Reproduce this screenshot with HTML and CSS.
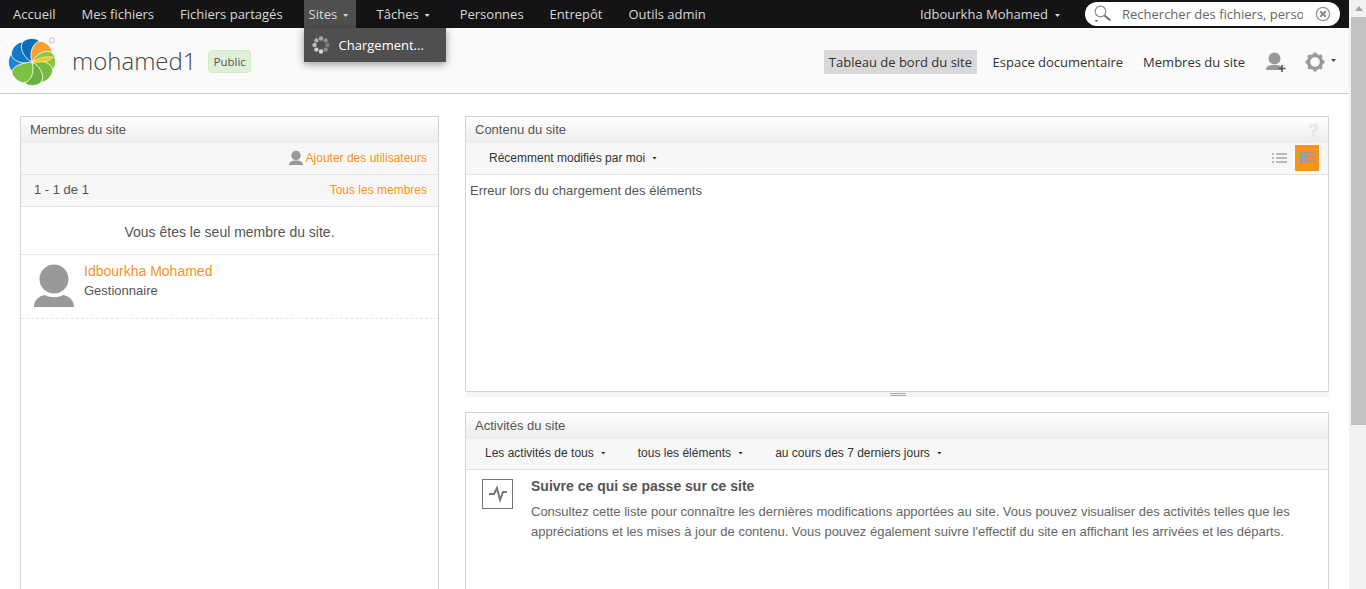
FILE: index.html
```html
<!DOCTYPE html>
<html lang="fr">
<head>
<meta charset="utf-8">
<title>mohamed1</title>
<link rel="stylesheet" href="styles.css">
</head>
<body>
<div class="window">
  <div class="page">
    <nav class="topbar">
      <a class="nav-item">Accueil</a>
      <a class="nav-item">Mes fichiers</a>
      <a class="nav-item">Fichiers partagés</a>
      <div class="nav-item nav-sites">Sites<span class="caret"></span>
        <div class="menu">
          <svg class="spinner" width="18" height="18" viewBox="0 0 18 18">
            <circle cx="9" cy="2.500" r="2.200" fill="#a8a8a8"/><circle cx="13.600" cy="4.400" r="2.200" fill="#8e8e8e"/>
            <circle cx="15.500" cy="9" r="2.200" fill="#7c7c7c"/><circle cx="13.600" cy="13.600" r="2.200" fill="#8c8c8c"/>
            <circle cx="9" cy="15.500" r="2.200" fill="#d6d6d6"/><circle cx="4.400" cy="13.600" r="2.200" fill="#cfcfcf"/>
            <circle cx="2.500" cy="9" r="2.200" fill="#bdbdbd"/><circle cx="4.400" cy="4.400" r="2.200" fill="#b0b0b0"/>
          </svg>
          <span>Chargement...</span>
        </div>
      </div>
      <a class="nav-item nav-tasks">Tâches<span class="caret"></span></a>
      <a class="nav-item">Personnes</a>
      <a class="nav-item">Entrepôt</a>
      <a class="nav-item">Outils admin</a>
      <a class="nav-item nav-user">Idbourkha Mohamed<span class="caret"></span></a>
      <div class="search">
        <svg width="20" height="20" viewBox="0 0 20 20" class="search-icon">
          <circle cx="7.500" cy="7.500" r="5.300" fill="none" stroke="#8d8d8d" stroke-width="1.200"/>
          <path d="M11.500 11.500l6 5" stroke="#777" stroke-width="2.200" fill="none"/>
          <path d="M1.500 16h4l-2 2.200z" fill="#777"/>
        </svg>
        <input class="search-input" type="text" placeholder="Rechercher des fichiers, personnes, sites">
        <svg width="16" height="16" viewBox="0 0 16 16" class="search-clear">
          <circle cx="8" cy="8" r="6.600" fill="none" stroke="#999" stroke-width="1.400"/>
          <path d="M5.200 5.200l5.600 5.600M10.800 5.200l-5.600 5.600" stroke="#888" stroke-width="2"/>
        </svg>
      </div>
    </nav>

    <header class="sitebar">
      <svg class="logo" width="50" height="50" viewBox="-25 -25 50 50">
        <defs>
          <path id="petal" d="M0 0C-10-4-14-14-11-19C-8-24 3-25 6-21C9-16 5-7 0 0Z"/>
        </defs>
        <g stroke="#fff" stroke-width="0.800">
          <use href="#petal" fill="#1a86cd" transform="rotate(-85)"/>
          <use href="#petal" fill="#1279c5" transform="rotate(-40)"/>
          <use href="#petal" fill="#0f6cb9" transform="rotate(5)"/>
          <use href="#petal" fill="#f9a12e" transform="rotate(50)"/>
          <use href="#petal" fill="#8cc63f" transform="rotate(95)"/>
          <use href="#petal" fill="#78bb3e" transform="rotate(140)"/>
          <use href="#petal" fill="#69b03d" transform="rotate(185)"/>
          <use href="#petal" fill="#7cc142" transform="rotate(230)"/>
        </g>
        <path d="M0 0C6-4 12-6 21-5C19-1 9 1 0 0Z" fill="#fcc716" stroke="#fff" stroke-width="0.500"/>
        <circle cx="20" cy="-21.500" r="2.600" fill="none" stroke="#aaa" stroke-width="0.700"/>
      </svg>
      <h1 class="site-title">mohamed1</h1>
      <span class="badge">Public</span>
      <nav class="site-nav">
        <a class="site-link active">Tableau de bord du site</a>
        <a class="site-link">Espace documentaire</a>
        <a class="site-link">Membres du site</a>
      </nav>
      <svg class="add-user" width="22" height="22" viewBox="0 0 22 22">
        <circle cx="9.500" cy="7.500" r="6" fill="#999"/>
        <path d="M1 19c0-4 3.500-5 8.500-5s8 1 8 5z" fill="#999"/>
        <path d="M17 14v7M13.500 17.500h7" stroke="#555" stroke-width="1.600"/>
      </svg>
      <svg class="gear" width="20" height="20" viewBox="0 0 20 20">
        <circle cx="10" cy="10" r="6.500" fill="none" stroke="#999" stroke-width="3.400"/>
        <path d="M10 .5v4M10 15.500v4M.5 10h4M15.500 10h4M3.300 3.300l2.800 2.800M13.900 13.900l2.800 2.800M16.700 3.300l-2.800 2.800M6.100 13.900l-2.800 2.800" stroke="#999" stroke-width="3"/>
      </svg>
      <span class="caret caret-dark"></span>
    </header>

    <main class="content">
      <section class="dashlet members">
        <h2 class="dashlet-title">Membres du site</h2>
        <div class="toolbar toolbar-end">
          <svg width="16" height="16" viewBox="0 0 16 16"><circle cx="8" cy="5.500" r="4.700" fill="#999"/><path d="M1 15c0-3.500 3-4.500 7-4.500s7 1 7 4.500z" fill="#999"/></svg>
          <a class="link">Ajouter des utilisateurs</a>
        </div>
        <div class="toolbar pager">
          <span class="pager-count">1 - 1 de 1</span>
          <a class="link">Tous les membres</a>
        </div>
        <p class="alone">Vous êtes le seul membre du site.</p>
        <div class="member">
          <svg width="42" height="44" viewBox="0 0 42 44">
            <circle cx="21" cy="15" r="14.500" fill="#999"/>
            <path d="M1 43c0-7 5-11 11-12 5 3 13 3 18 0 6 1 11 5 11 12z" fill="#999"/>
          </svg>
          <div class="member-info">
            <a class="member-name">Idbourkha Mohamed</a>
            <span class="member-role">Gestionnaire</span>
          </div>
        </div>
      </section>

      <div class="column">
        <div class="resizable">
          <section class="dashlet site-content">
            <h2 class="dashlet-title">Contenu du site<span class="help">?</span></h2>
            <div class="toolbar filters">
              <a class="filter">Récemment modifiés par moi<span class="caret caret-small"></span></a>
              <div class="views">
                <svg width="16" height="14" viewBox="0 0 16 14" class="view-icon">
                  <path d="M1 2h2v2H1zM5 2h11v2H5zM1 6h2v2H1zM5 6h11v2H5zM1 10h2v2H1zM5 10h11v2H5z" fill="#bbb"/>
                </svg>
                <span class="view-active">
                  <svg width="15" height="12" viewBox="0 0 15 12">
                    <path d="M0 0h3v3H0zM0 4h3v3H0zM0 8h3v3H0zM4 0h11v1H4zM4 2h4v1H4zM4 4h11v1H4zM4 6h4v1H4zM4 8h11v1H4zM4 10h4v1H4z" fill="#999"/>
                  </svg>
                </span>
              </div>
            </div>
            <p class="error">Erreur lors du chargement des éléments</p>
          </section>
          <div class="resize-bar"><span class="grip"></span></div>
        </div>

        <section class="dashlet activities">
          <h2 class="dashlet-title">Activités du site</h2>
          <div class="toolbar filters activity-filters">
            <a class="filter">Les activités de tous<span class="caret caret-small"></span></a>
            <a class="filter">tous les éléments<span class="caret caret-small"></span></a>
            <a class="filter">au cours des 7 derniers jours<span class="caret caret-small"></span></a>
          </div>
          <div class="welcome">
            <svg class="welcome-icon" width="32" height="30" viewBox="0 0 32 30">
              <rect x="0.500" y="0.500" width="30" height="29" fill="#fff" stroke="#777"/>
              <path d="M7 15h5l3-6 3 12 3-8h4" fill="none" stroke="#777" stroke-width="2"/>
            </svg>
            <div>
              <h3 class="welcome-title">Suivre ce qui se passe sur ce site</h3>
              <p class="welcome-text">Consultez cette liste pour connaître les dernières modifications apportées au site. Vous pouvez visualiser des activités telles que les appréciations et les mises à jour de contenu. Vous pouvez également suivre l'effectif du site en affichant les arrivées et les départs.</p>
            </div>
          </div>
        </section>
      </div>
    </main>
  </div>
  <div class="scrollbar">
    <span class="scroll-up"></span>
    <span class="scroll-thumb"></span>
  </div>
</div>
</body>
</html>
```

FILE: styles.css
```css
* { box-sizing: border-box; }
html, body { margin: 0; height: 100%; overflow: hidden; }
body { font-family: "Liberation Sans", Arial, sans-serif; color: #555; background: #fff; }
h1, h2, h3, p { margin: 0; font-weight: normal; }

.window { display: flex; height: 589px; overflow: hidden; }
.page { flex: 1; min-width: 0; }

.scrollbar { width: 17px; background: #f1f1f1; padding-left: 2px; flex: none; display: flex; flex-direction: column; }
.scroll-up { height: 17px; position: relative; }
.scroll-up::after { content: ""; position: absolute; left: 4px; top: 6px; border: 4px solid transparent; border-top: 0; border-bottom: 5px solid #a3a3a3; }
.scroll-thumb { height: 408px; background: #c1c1c1; }

.topbar { height: 28px; background: #141414; display: flex; align-items: stretch; font: 13px/28px "Open Sans", sans-serif; color: #ddd; }
.nav-item { padding: 0 13px; color: #d8d8d8; display: block; position: relative; white-space: nowrap; }
.nav-sites { margin-left: 8px; padding: 0 0 0 5px; width: 52px; background: #4f4f4f; }
.nav-tasks { margin-left: 8px; padding-right: 17px; }
.nav-user { margin-left: auto; padding-right: 0; }
.caret { display: inline-block; width: 5px; height: 3px; margin-left: 6px; vertical-align: 2px; background: #ddd; clip-path: polygon(0 0, 100% 0, 50% 100%); }
.nav-user .caret { margin-left: 7px; }
.caret-dark { background: #444; margin: 0 0 0 6px; align-self: center; flex: none; }
.caret-small { background: #333; margin-left: 7px; }

.menu { position: absolute; left: 0; top: 28px; width: 142px; height: 34px; background: #4f4f4f; box-shadow: 0 2px 8px rgba(0,0,0,.4); display: flex; align-items: center; padding-left: 8px; gap: 9px; color: #fff; font-size: 13px; z-index: 2; }
.spinner { flex: none; }

.search { width: 255px; height: 24px; margin: 2px 9px 0 25px; border-radius: 12px; background: #fff; display: flex; align-items: center; padding: 0 9px 0 8px; }
.search-icon { flex: none; }
.search-input { flex: 1; min-width: 0; border: 0; outline: 0; padding: 0; margin: 0 12px 0 9px; background: transparent; font: 13px "Open Sans", sans-serif; color: #666; }
.search-input::placeholder { color: #666; opacity: 1; }
.search-clear { flex: none; }

.sitebar { height: 66px; background: #fafafa; border-bottom: 1px solid #ccc; display: flex; align-items: center; padding: 0 13px 0 7px; font-family: "Open Sans", sans-serif; }
.logo { flex: none; margin-top: 2px; }
.site-title { font: 300 24px "Open Sans", sans-serif; color: #444; margin-left: 15px; }
.badge { margin-left: 11px; height: 23px; padding: 0 4px 0 5px; background: #dff0d8; border: 1px solid #d6e9c6; border-radius: 4px; font-size: 11.500px; line-height: 21px; color: #555; margin-top: 2px; }
.site-nav { margin-left: auto; display: flex; gap: 16px; font-size: 13px; color: #333; margin-top: 2px; }
.site-link { padding: 0 4px; height: 24px; line-height: 24px; margin-right: -4px; }
.site-link.active { background: #d9d9d9; padding: 0 4.500px 0 5px; margin-right: -4px; }
.add-user { margin-left: 20px; margin-top: 2px; flex: none; }
.gear { margin-left: 18px; margin-top: 2px; flex: none; }

.content { display: flex; gap: 26px; padding: 22px 20px 0; align-items: flex-start; }
.members { width: 419px; height: 600px; flex: none; }
.column { flex: 1; min-width: 0; display: flex; flex-direction: column; gap: 15px; }

.dashlet { border: 1px solid #d3d3d3; border-radius: 1px; background: #fff; font-size: 12px; }
.dashlet-title { height: 26px; background: linear-gradient(#fff, #ececec); font-size: 13px; line-height: 26px; padding: 0 9px; color: #555; position: relative; }
.help { position: absolute; right: 9px; top: 1px; font-size: 18px; font-weight: bold; color: #e6e6e6; }

.toolbar { background: #f7f7f7; border-bottom: 1px solid #e3e3e3; display: flex; align-items: center; }
.toolbar-end { height: 32px; justify-content: flex-end; padding: 0 11px 2px; gap: 2px; }
.pager { height: 32px; justify-content: space-between; padding: 0 11px 2px 13px; }
.pager-count { font-size: 13px; }
.link { color: #f7931e; }
.alone { height: 48px; line-height: 51px; text-align: center; font-size: 14px; border-bottom: 1px solid #e8e8e8; }
.member { height: 64px; display: flex; border-bottom: 1px dashed #e8e8e8; padding: 9px 12px; gap: 9px; }
.member-info { display: flex; flex-direction: column; gap: 4px; margin-top: -1px; }
.member-name { color: #f7931e; font-size: 14px; }
.member-role { font-size: 13px; color: #555; }

.site-content { height: 276px; }
.resize-bar { height: 5px; margin: 0 0 0 1px; background: #f5f5f5; display: flex; justify-content: center; }
.grip { width: 16px; height: 3px; border-top: 1px solid #aaa; border-bottom: 1px solid #aaa; margin-top: 1px; }
.filters { height: 32px; padding: 0 0 2px 23px; color: #333; justify-content: space-between; }
.filter { white-space: nowrap; }
.views { display: flex; align-items: center; gap: 8px; padding: 0 9px 0 0; }
.view-icon { display: block; }
.view-active { width: 24px; height: 26px; background: #f7931e; display: flex; align-items: center; justify-content: center; }
.error { padding: 8px 4px; font-size: 13px; color: #555; }

.activities { height: 220px; }
.activity-filters { height: 31px; padding: 0 0 3px 19px; justify-content: flex-start; gap: 32px; }
.welcome { display: flex; padding: 9px 16px 0 16px; gap: 17px; }
.welcome-icon { flex: none; }
.welcome-title { font-size: 14px; font-weight: bold; color: #555; margin: -1px 0 8px; }
.welcome-text { font-size: 13px; line-height: 20px; color: #666; }
```
